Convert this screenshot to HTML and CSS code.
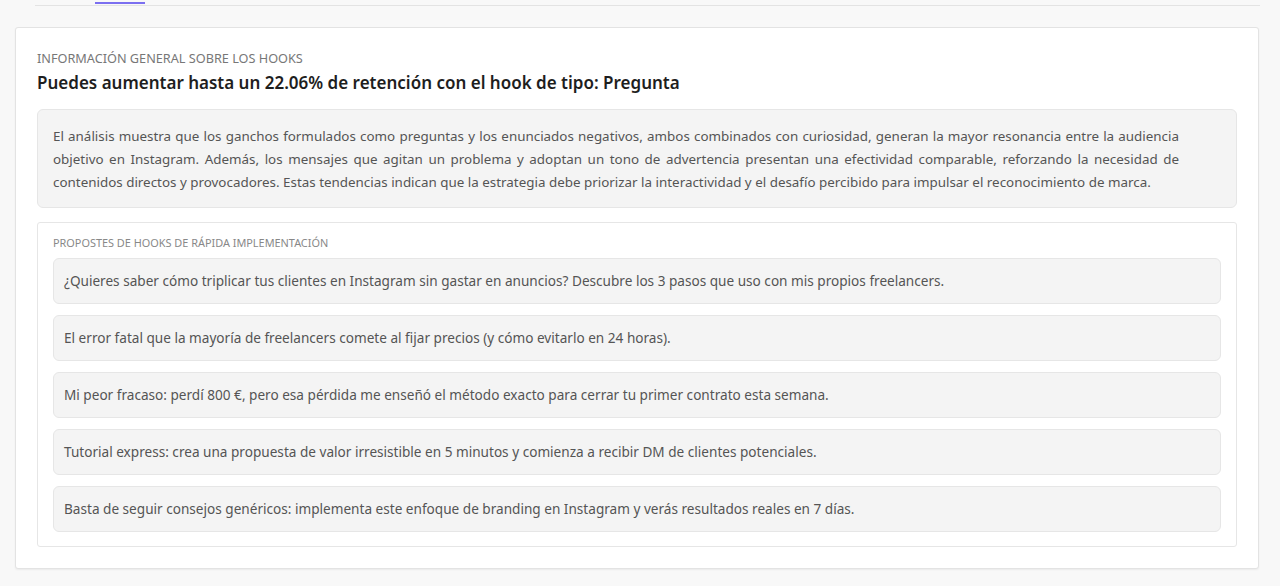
FILE: index.html
```html
<!DOCTYPE html>
<html lang="es">
<head>
<meta charset="utf-8">
<link rel="stylesheet" href="styles.css">
</head>
<body>
<div class="tabs">
  <div class="tab"></div>
  <div class="tab active"></div>
</div>
<main class="card">
  <div class="eyebrow">Información general sobre los hooks</div>
  <h1 class="title">Puedes aumentar hasta un 22.06% de retención con el hook de tipo: Pregunta</h1>
  <div class="summary">El análisis muestra que los ganchos formulados como preguntas y los enunciados negativos, ambos combinados con curiosidad, generan la mayor resonancia entre la audiencia objetivo en Instagram. Además, los mensajes que agitan un problema y adoptan un tono de advertencia presentan una efectividad comparable, reforzando la necesidad de contenidos directos y provocadores. Estas tendencias indican que la estrategia debe priorizar la interactividad y el desafío percibido para impulsar el reconocimiento de marca.</div>
  <section class="proposals">
    <div class="small-label">Propostes de hooks de rápida implementación</div>
    <div class="hook">¿Quieres saber cómo triplicar tus clientes en Instagram sin gastar en anuncios? Descubre los 3 pasos que uso con mis propios freelancers.</div>
    <div class="hook">El error fatal que la mayoría de freelancers comete al fijar precios (y cómo evitarlo en 24 horas).</div>
    <div class="hook">Mi peor fracaso: perdí 800 €, pero esa pérdida me enseñó el método exacto para cerrar tu primer contrato esta semana.</div>
    <div class="hook">Tutorial express: crea una propuesta de valor irresistible en 5 minutos y comienza a recibir DM de clientes potenciales.</div>
    <div class="hook">Basta de seguir consejos genéricos: implementa este enfoque de branding en Instagram y verás resultados reales en 7 días.</div>
  </section>
</main>
</body>
</html>
```

FILE: styles.css
```css
* { box-sizing: border-box; }
html, body { margin: 0; padding: 0; }
body {
  background: #f8f8f8;
  font-family: "Noto Sans", "Open Sans", sans-serif;
  color: #333;
  height: 586px;
  overflow: hidden;
}
.tabs {
  display: flex;
  gap: 10px;
  margin: 0 20px 0 35px;
  height: 6px;
  border-bottom: 1px solid #e3e3e3;
}
.tab { width: 50px; }
.tab.active { border-bottom: 2px solid #7b6ff0; margin-bottom: -1px; height: 4px; }
.card {
  margin: 21px 21px 0 15px;
  background: #fff;
  border: 1px solid #e3e3e3;
  border-radius: 3px;
  box-shadow: 0 1px 2px rgba(0,0,0,0.06);
  padding: 22px 21px 21px 21px;
}
.eyebrow {
  font-size: 12.7px;
  text-transform: uppercase;
  color: #777;
  line-height: 16px;
}
.title {
  margin: 5px 0 14px;
  font-size: 17px;
  font-weight: 600;
  color: #1e1e1e;
  line-height: 24px;
}
.summary {
  background: #f4f4f4;
  border: 1px solid #e6e6e6;
  border-radius: 6px;
  padding: 15px 57px 13px 15px;
  font-size: 13.4px;
  line-height: 23px;
  color: #555;
  text-align: justify;
}
.proposals {
  margin-top: 14px;
  border: 1px solid #e6e6e6;
  border-radius: 3px;
  padding: 13px 15px 14px;
  display: flex;
  flex-direction: column;
  gap: 11px;
}
.small-label {
  font-size: 10.9px;
  text-transform: uppercase;
  color: #888;
  line-height: 14px;
  margin-bottom: -3px;
}
.hook {
  background: #f4f4f4;
  border: 1px solid #e6e6e6;
  border-radius: 6px;
  padding: 0 10px 1px;
  height: 46px;
  display: flex;
  align-items: center;
  font-size: 13.6px;
  color: #555;
}
```
